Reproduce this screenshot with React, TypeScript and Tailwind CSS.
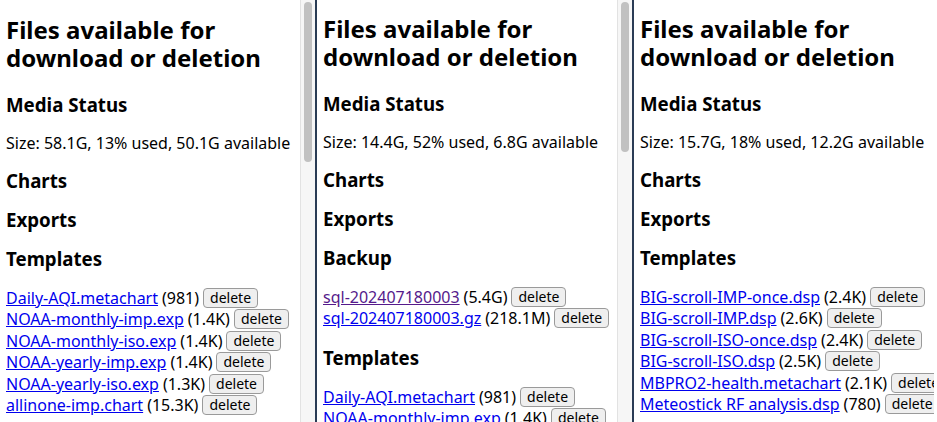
const serif = "font-['Liberation_Serif']";

type Item = { name: string; size: string; visited?: boolean };
type Section = { title: string; items?: Item[] };
type Panel = { size: string; sections: Section[]; thumb: string; top: string };

const PANELS: Panel[] = [
  {
    size: "Size: 58.1G, 13% used, 50.1G available",
    thumb: "h-[160px]",
    top: "pt-[16px]",
    sections: [
      { title: "Charts" },
      { title: "Exports" },
      {
        title: "Templates",
        items: [
          { name: "Daily-AQI.metachart", size: "(981)" },
          { name: "NOAA-monthly-imp.exp", size: "(1.4K)" },
          { name: "NOAA-monthly-iso.exp", size: "(1.4K)" },
          { name: "NOAA-yearly-imp.exp", size: "(1.4K)" },
          { name: "NOAA-yearly-iso.exp", size: "(1.3K)" },
          { name: "allinone-imp.chart", size: "(15.3K)" },
        ],
      },
    ],
  },
  {
    size: "Size: 14.4G, 52% used, 6.8G available",
    thumb: "h-[150px]",
    top: "pt-[15px]",
    sections: [
      { title: "Charts" },
      { title: "Exports" },
      {
        title: "Backup",
        items: [
          { name: "sql-202407180003", size: "(5.4G)", visited: true },
          { name: "sql-202407180003.gz", size: "(218.1M)" },
        ],
      },
      {
        title: "Templates",
        items: [
          { name: "Daily-AQI.metachart", size: "(981)" },
          { name: "NOAA-monthly-imp.exp", size: "(1.4K)" },
        ],
      },
    ],
  },
  {
    size: "Size: 15.7G, 18% used, 12.2G available",
    thumb: "h-[150px]",
    top: "pt-[15px]",
    sections: [
      { title: "Charts" },
      { title: "Exports" },
      {
        title: "Templates",
        items: [
          { name: "BIG-scroll-IMP-once.dsp", size: "(2.4K)" },
          { name: "BIG-scroll-IMP.dsp", size: "(2.6K)" },
          { name: "BIG-scroll-ISO-once.dsp", size: "(2.4K)" },
          { name: "BIG-scroll-ISO.dsp", size: "(2.5K)" },
          { name: "MBPRO2-health.metachart", size: "(2.1K)" },
          { name: "Meteostick RF analysis.dsp", size: "(780)" },
        ],
      },
    ],
  },
];

function Content({ p }: { p: Panel }) {
  return (
    <div className={`px-[6px] ${p.top} ${serif} text-black`}>
      <h1 className="text-[24px] font-bold leading-[28px]">
        Files available for download or deletion
      </h1>
      <h3 className="mt-[22px] text-[18.7px] font-bold leading-[22px]">Media Status</h3>
      <p className="mt-[17px] text-[16px] leading-[20px]">{p.size}</p>
      {p.sections.map((s) => (
        <div key={s.title}>
          <h3 className="mt-[17px] text-[18.7px] font-bold leading-[22px]">{s.title}</h3>
          {s.items && (
            <div className="mt-[17px] mb-[18px] text-[16px]">
              {s.items.map((it) => (
                <div key={it.name} className="flex h-[21.5px] items-center gap-[4px] whitespace-nowrap">
                  <a className={`underline ${it.visited ? "text-[#551a8b]" : "text-[#0000ee]"}`}>{it.name}</a>
                  <span>{it.size}</span>
                  <button className="h-[20px] rounded-[4px] border border-[#9a9a9a] bg-[#efefef] px-[6px] font-['Liberation_Sans'] text-[14px] leading-[18px]">
                    delete
                  </button>
                </div>
              ))}
            </div>
          )}
        </div>
      ))}
    </div>
  );
}

export default function App() {
  return (
    <div className="flex h-[422px] w-[937px] overflow-hidden bg-white">
      {PANELS.map((p, i) => (
        <div key={i} className="flex h-full shrink-0">
          <div className="h-full w-[300px] overflow-hidden bg-white">
            <Content p={p} />
          </div>
          {i < 2 && (
            <>
              <div className="h-full w-[15px] border-l border-[#e2e2e2] bg-[#f6f6f6] px-[3px] pt-[2px]">
                <div className={`${p.thumb} w-[8px] rounded-full bg-[#c1c1c1]`} />
              </div>
              <div className="h-full w-[2px] bg-[#2a3c55]" />
            </>
          )}
        </div>
      ))}
    </div>
  );
}
